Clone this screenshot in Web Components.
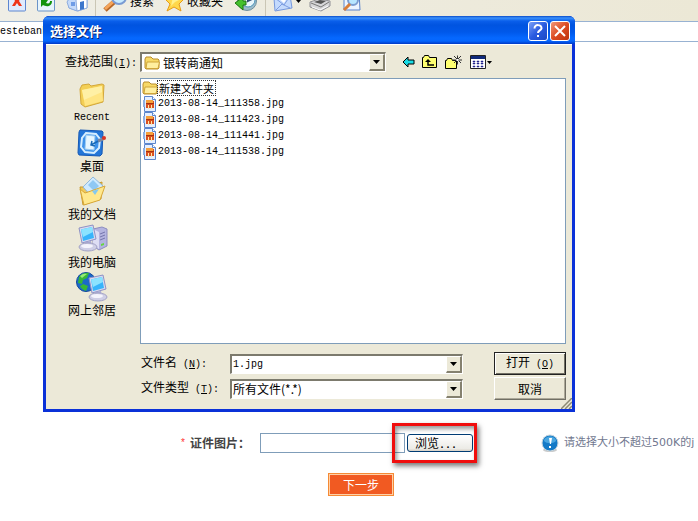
<!DOCTYPE html>
<html lang="zh-CN">
<head>
<meta charset="utf-8">
<title>选择文件</title>
<style>
html, body { margin: 0; height: 100%; overflow: hidden; background: #fff; }
body { font: 12px/16px "Noto Sans CJK SC", sans-serif; color: #000; position: relative; }
</style>
</head>
<body>
<browser-chrome></browser-chrome>
<upload-form></upload-form>
<file-dialog heading="选择文件">
  <place-item slot="places" icon="recent" latin>Recent</place-item>
  <place-item slot="places" icon="desktop">桌面</place-item>
  <place-item slot="places" icon="documents">我的文档</place-item>
  <place-item slot="places" icon="computer">我的电脑</place-item>
  <place-item slot="places" icon="network">网上邻居</place-item>
  <file-item slot="files" icon="folder" focused>新建文件夹</file-item>
  <file-item slot="files" icon="image">2013-08-14_111358.jpg</file-item>
  <file-item slot="files" icon="image">2013-08-14_111423.jpg</file-item>
  <file-item slot="files" icon="image">2013-08-14_111441.jpg</file-item>
  <file-item slot="files" icon="image">2013-08-14_111538.jpg</file-item>
</file-dialog>

<script>
const FOLDER = '<path d="M1 4 2 2h5l2 2h5l1 1v8l-1 1H2l-1-1z" fill="#f7d967" stroke="#b98d2c"/><path d="M3 7h12.5L14 13.5H2z" fill="#ffef9f" stroke="#cfa53a"/>';
const MONITOR = '<path d="M3 4 17 1l3 14-14 4z" fill="#d8daf0" stroke="#8f92c4"/><path d="M5 5.500 16 3l2 11-11 3z" fill="#38b4fb"/><path d="M5 5.500 16 3l1 5-10 5z" fill="#8be3ff"/><path d="M9 18l6-1 1 5-6 1z" fill="#a9a9d6"/><ellipse cx="12" cy="23" rx="9" ry="4" fill="#cfcfe6" stroke="#a3a3c6"/><ellipse cx="11" cy="22" rx="6" ry="2" fill="#f4f4fc"/>';
const ICONS = {
  stop: [18, 20, '<rect x=".5" y="-3" width="17" height="22" rx="1" fill="#dfeafd" stroke="#5c86d0"/><path d="M4 3h3l2 4 2-4h3l-3 6 3 5h-3l-2-3-2 3H4l3-5z" fill="#ee3418"/>'],
  refresh: [18, 20, '<rect x=".5" y="-3" width="17" height="22" rx="1" fill="#e7f4fb" stroke="#6b94c8"/><path d="M15 9c0 6-6 6-9 4l-2 2V8h7l-2 3c3 1 4 0 4-2z" fill="#12930c"/><path d="M4 5h8" stroke="#26a619" stroke-width="3"/>'],
  home: [22, 22, '<path d="M2 8 12 1l9 7v10l-9 3-9-3z" fill="#dce9fc" stroke="#8fadde"/><path d="M1 12 7 3l6 7-2 11-8-3z" fill="#c5dafa" stroke="#8fadde"/><path d="M10 10 16 5l5 4v9l-10 3z" fill="#fff" stroke="#8fadde"/><path d="M14 12l4-1v8l-4 1z" fill="#3d77cc"/><path d="M5 12h4v4H5z" fill="#6f9ce6"/>'],
  search: [24, 22, '<path d="m2 20 9-8" stroke="#b66729" stroke-width="5"/><path d="m2 19 9-8" stroke="#f5a55b" stroke-width="3"/><circle cx="16" cy="7" r="7" fill="#c8ebff" stroke="#7a9bd3" stroke-width="2"/><path d="M12 6q1-4 6-3" stroke="#fff" stroke-width="2" fill="none"/>'],
  star: [19, 22, '<path d="m9 1 3 7 7 1-5 5 2 7-7-4-7 4 3-7-5-5 7-1z" fill="#ffd84b" stroke="#e79b17"/><path d="m9 4 1 5 4 1-4 2-4 4 1-5z" fill="#fff18d"/>'],
  history: [24, 22, '<circle cx="13" cy="11" r="9.500" fill="#9dbccb" stroke="#6f909e"/><circle cx="14" cy="10" r="7" fill="#eaf7fb" stroke="#4b93b7"/><path d="M14 5v6l4-2" stroke="#344c77" stroke-width="2" fill="none"/><path d="m1 13 8-6v4h3v4H9v5z" fill="#45c12e" stroke="#1e7512"/>'],
  mail: [20, 22, '<path d="M1 8 17 5l2 13-17 3z" fill="#c4dafd" stroke="#7698dc"/><path d="m2 8 9 7 6-9M3 20l6-6 8 4" fill="none" stroke="#7c9ce0"/><path d="M4 7 16 5l-5 8z" fill="#fff"/>'],
  print: [22, 22, '<path d="m5 5 11-3 3 8-9 3z" fill="#fff" stroke="#bbb"/><path d="m1 12 9-3 11 2v5l-9 5L1 17z" fill="#d6d6d8" stroke="#909095"/><path d="m2 13 10 4 8-5" fill="none" stroke="#777"/><path d="m5 12 6-2 6 1-5 3z" fill="#555"/><path d="m3 17 8 3 8-4" stroke="#fff" fill="none"/>'],
  preview: [20, 22, '<path d="M2 1h15l1 19H2z" fill="#edf4ff" stroke="#5b83cc"/><circle cx="11" cy="10" r="5" fill="#b8e6ff" stroke="#7c9cd0" stroke-width="2"/><path d="m2 20 6-6" stroke="#d97d38" stroke-width="3"/>'],
  caret: [5, 3, '<path d="M0 0h5L2.500 3z"/>'],
  arrow: [7, 4, '<path d="M0 0h7L3.500 4z"/>'],
  help: [18, 18, '<path d="M5.500 6.500c0-5 7.500-4 7 0-.5 2-3.500 2-3.500 4.500" fill="none" stroke="#fff" stroke-width="2"/><path d="M8 13h2v2H8z" fill="#fff"/>'],
  close: [18, 18, '<path d="m4 4 10 10M14 4 4 14" stroke="#fff" stroke-width="2"/>'],
  folder: [16, 16, FOLDER],
  image: [16, 16, '<path d="M2.500.5h8l3 3v12h-11z" fill="#e4efff" stroke="#5c86cc"/><path d="M10.500.5v3h3" fill="#fff" stroke="#5c86cc"/><path d="M4 5h8v7H4z" fill="#d9501f"/><path d="M4 4h7v3H4z" fill="#f5a03c"/><path d="M4 7h8v1H4z" fill="#a9300e"/><path d="M6 9h1v4H6zM9 9h1v4H9z" fill="#ffe5a3"/><path d="M1 4h2v7H1z" fill="#8eb0e3"/>'],
  recent: [28, 28, '<path d="m2 8 2-4 7-1 2 2 11-2 2 1-1 17-18 5-4-3z" fill="#f3cf55" stroke="#d3a73a"/><path d="M4 9 24 5l1 15-18 5z" fill="#ffe583"/><path d="M4 9 24 5v6L6 19z" fill="#fff0a5"/>'],
  desktop: [30, 28, '<path d="m3 1 22 1 1 1-1 22-2 2-21-1-1-2L2 3z" fill="#2376d8" stroke="#1558b5"/><path d="m9 4 10 1 4 5-1 9-5 5-9-1-4-5 1-9z" fill="#3f93ea" stroke="#d6eeff" stroke-width="2"/><path d="m9 6 9 1-1 14-9-1z" fill="#e6f6ff" stroke="#9acbf3"/><path d="M25 10 14 16m1-4-1 4 4 1" fill="none" stroke="#176ab8" stroke-width="1.500"/><path d="m21 12 5-2" stroke="#7a86a0" stroke-width="3"/><circle cx="27" cy="9" r="2" fill="#d93624"/>'],
  documents: [30, 30, '<path d="M3 11h7l15-5-1 17-18 6z" fill="#f0c95a" stroke="#c99a2f"/><path d="M6 11 16 1l10 9-8 14z" fill="#cfeaff" stroke="#91b9dc"/><path d="m11 9 5-5 6 6-5 5z" fill="#8fc8f4"/><path d="m3 13 5 4 3-1 17-6-5 14-16 5z" fill="#ffe88d" stroke="#d8a738"/><path d="m15 15 7-2-4 6z" fill="#84c9ee"/>'],
  computer: [32, 30, '<path d="m17 5 9-2 5 2v17l-8 4-6-4z" fill="#b4b4e0" stroke="#8d8dc0"/><path d="m17 5 6 3v17l-6-4z" fill="#dedef4"/><path d="m24 10 5-2m-5 5 5-2m-5 5 5-2" stroke="#7474ac"/><path d="m25 20 3-1v2l-3 1z" fill="#66d63f"/>' + MONITOR],
  network: [32, 31, '<circle cx="10" cy="11" r="9.500" fill="#1b69ca" stroke="#13489b"/><path d="M3 6q4-5 10-4l-2 5-4 2-1 4-4-1zM7 13l5 2-2 5q-5-2-6-5z" fill="#37b737"/><path d="M4 5q3-3 7-2l-5 4z" fill="#97ec74"/><g transform="translate(10 3)">' + MONITOR + '</g>'],
  back: [13, 12, '<path d="m1 6 5-5v3h6v4H6v3z" fill="#18dce6" stroke="#000"/>'],
  up: [16, 14, '<path d="M.5 2.500h1l1-2h4l1 2h7v10H.5z" fill="#ffff70" stroke="#000"/><path d="M12 10H6V6" fill="none" stroke="#000" stroke-width="1.500"/><path d="m3 7 3-3 3 3z"/>'],
  create: [18, 15, '<path d="M.5 5.500h1l1-2h4l1 2h4v8H.5z" fill="#ffff70" stroke="#000"/><path d="M12.500.5v9M8 5h9M9 1l7 7M16 1 9 8" stroke="#333"/><path d="M11.500 4h2v2h-2z" fill="#fff"/>'],
  views: [16, 14, '<path d="M.5.500h15v13H.5z" fill="#fff" stroke="#222"/><path d="M1 1h14v3H1z" fill="#102a7a"/><path d="M3 6h2v1H3zM7 6h2v1H7zM11 6h2v1h-2zM3 8h2v1H3zM7 8h2v1H7zM11 8h2v1h-2zM3 11h2v1H3zM7 11h2v1H7zM11 11h2v1h-2z" fill="#25278c" stroke="#25278c" stroke-width=".5"/>'],
  info: [18, 19, '<ellipse cx="9" cy="16" rx="7" ry="2" fill="#ccc"/><circle cx="9" cy="9" r="8" fill="#147ac7" stroke="#c7d5dd"/><path d="M3 7c0-6 12-6 12 0-3 3-9 3-12 0z" fill="#4aa6e0"/><path d="M8 4h3l-1 6H9zM8 12h2v2H8z" fill="#fff"/>'],
  grip: [11, 11, '<path d="M0 11 11 0M4 11l7-7M8 11l3-3" stroke="#8c8974" stroke-width="1.500"/>']
};

function define(name, css, render) {
  customElements.define(name, class extends HTMLElement {
    constructor() {
      super();
      this.attachShadow({ mode: 'open' });
    }
    connectedCallback() {
      const t = document.createElement('template');
      t.innerHTML = '<style>*{box-sizing:border-box}' + css + '</style>' + render(this);
      this.shadowRoot.replaceChildren(t.content.cloneNode(true));
    }
  });
}

define('xp-icon', ':host{display:inline-flex;flex:none}svg{display:block}', el => {
  const [w, h, body] = ICONS[el.getAttribute('name')];
  return `<svg width="${w}" height="${h}" viewBox="0 0 ${w} ${h}" aria-hidden="true">${body}</svg>`;
});

define('browser-chrome', `
  :host{display:block}
  .tools{display:flex;align-items:flex-end;height:21px;padding:0 8px 9px;background:linear-gradient(90deg,#efeee6,#ece8d6);overflow:hidden}
  .tools button{display:flex;align-items:flex-end;gap:3px;border:0;padding:0;background:none;font:inherit;margin-right:11px}
  .tools .tight{margin-right:7px}
  .sep{width:1px;height:32px;background:#cac6b5;margin:0 7px -9px 0}
  .text span{line-height:16px;padding-bottom:3px}
  .tools .menu{align-items:center;margin-right:8px}
  .address{height:21px;background:#fff;border:solid #98b2d2;border-width:1px 0}
  input{display:block;width:100%;height:19px;border:0;padding:0;font:10px/19px "Liberation Mono",monospace;outline:0}
`, () => `
  <div class="tools">
    <button aria-label="停止"><xp-icon name="stop"></xp-icon></button>
    <button aria-label="刷新"><xp-icon name="refresh"></xp-icon></button>
    <button class="tight" aria-label="主页"><xp-icon name="home"></xp-icon></button>
    <span class="sep"></span>
    <button class="text"><xp-icon name="search"></xp-icon><span>搜索</span></button>
    <button class="text"><xp-icon name="star"></xp-icon><span>收藏夹</span></button>
    <button class="tight" aria-label="历史"><xp-icon name="history"></xp-icon></button>
    <span class="sep"></span>
    <button class="menu" aria-label="邮件"><xp-icon name="mail"></xp-icon><xp-icon name="caret"></xp-icon></button>
    <button aria-label="打印"><xp-icon name="print"></xp-icon></button>
    <button aria-label="预览"><xp-icon name="preview"></xp-icon></button>
  </div>
  <div class="address"><input aria-label="地址" value="estebank" readonly></div>`);

define('highlight-box', `
  :host{display:block;position:relative}
  .frame{position:absolute;inset:-11px -4px -11px -15px;border:3px solid #f00d0d;box-shadow:2px 3px 5px #0008,inset 2px 3px 4px #0006;pointer-events:none}
`, () => '<slot></slot><div class="frame"></div>');

define('upload-form', `
  :host{display:block;padding-top:390px}
  .row{display:flex;align-items:center;height:22px;padding-left:181px;white-space:nowrap}
  .star{color:#f33;font:10px/12px "Liberation Sans",sans-serif;width:9px}
  label{font-weight:700;color:#444;width:70px}
  input{width:145px;height:20px;border:1px solid #7f9db9;background:#fff;padding:0 3px;margin-right:2px;flex:none}
  .browse{display:block;width:66px;height:18px;border:1px solid #003c74;border-radius:3px;background:linear-gradient(#fff,#ecebe6 85%,#d6d0c5);font:inherit;line-height:14px;padding:0 7px;text-align:left}
  .browse span{font:700 10px "Liberation Mono",monospace}
  .hint{display:flex;align-items:center;gap:5px;margin-left:68px;font:11px/16px "DejaVu Sans","Noto Sans CJK SC",sans-serif;color:#71788f}
  .next{display:block;margin:19px 0 0 328px;width:66px;height:23px;border:1px solid #f58a35;box-shadow:inset 0 0 0 1px #ffd0a6;background:#f15a22;color:#fff;font:inherit;padding:0}
`, () => `
  <div class="row"><span class="star">*</span><label for="f">证件图片：</label><input id="f" type="text">
    <highlight-box><button class="browse">浏览<span>...</span></button></highlight-box>
    <div class="hint"><xp-icon name="info"></xp-icon><span>请选择大小不超过500K的j</span></div></div>
  <button class="next">下一步</button>`);

define('place-item', `
  :host{display:block}
  button{display:flex;flex-direction:column;align-items:center;justify-content:flex-end;width:100%;height:48px;border:0;padding:0;background:none;font:inherit;line-height:16px;white-space:nowrap}
  :host([latin]) button{font:10px/16px "Liberation Mono",monospace}
  xp-icon{height:31px;align-items:center}
`, el => `<button><xp-icon name="${el.getAttribute('icon')}"></xp-icon><span><slot></slot></span></button>`);

define('file-item', `
  :host{display:flex;align-items:center;height:16px;font:10px/14px "Liberation Mono",monospace}
  :host([focused]){font:11px/14px "Noto Sans CJK SC",sans-serif}
  :host([focused]) span{outline:1px dotted #333;padding:0 1px}
`, el => `<xp-icon name="${el.getAttribute('icon')}"></xp-icon><span><slot></slot></span>`);

define('combo-field', `
  :host{display:flex;align-items:center;height:20px;background:#fff;border:solid;border-width:2px 1px 1px 2px;border-color:#7c7a6d #fff #fff #7c7a6d;min-width:0}
  ::slotted(select),::slotted(input){appearance:none;flex:1;min-width:0;height:17px;border:0;padding:0 0 0 1px;margin:0;background:none;font:12px/16px "Noto Sans CJK SC",sans-serif;color:#000;outline:0}
  ::slotted(input){font:10px/16px "Liberation Mono",monospace}
  ::slotted(xp-icon){margin:0 2px}
  .drop{display:flex;align-items:center;justify-content:center;flex:none;width:16px;height:17px;background:#ece9d8;border:solid;border-width:1px 2px 2px 1px;border-color:#fff #85816f #85816f #fff;pointer-events:none}
`, () => '<slot></slot><span class="drop"><xp-icon name="arrow"></xp-icon></span>');

define('classic-button', `
  :host{display:block}
  button{display:block;width:100%;height:23px;border:1px solid;border-color:#fff #716f64 #716f64 #fff;box-shadow:inset -1px -1px #aca899;background:#ece9d8;font:12px/16px "Noto Sans CJK SC",sans-serif;padding:0}
  :host([primary]) button{border-color:#222;box-shadow:inset 1px 1px #fff,inset -1px -1px #716f64}
`, () => '<button><slot></slot></button>');

define('file-dialog', `
  :host{position:absolute;top:16px;left:43px;right:123px;display:block;border:solid #0a31d8;border-width:0 3px 3px;border-radius:6px 6px 0 0;background:#0a31d8;box-shadow:inset 0 0 0 1px #0019a0}
  header{display:flex;align-items:center;gap:2px;height:28px;margin:0 -3px;padding:2px 5px 0 7px;border-radius:6px 6px 0 0;background:linear-gradient(#0a4bc9,#3a91fb 2px,#0a5feb 5px,#0054e0 9px,#0058ea 16px,#0568ff 22px,#0566fd 25px,#0038c5)}
  h1{flex:1;margin:0;color:#fff;font-size:13px;line-height:20px;text-shadow:1px 1px #0b2470}
  header button{display:flex;width:20px;height:20px;align-items:center;justify-content:center;padding:0;border:1px solid #fff;border-radius:3px;background:linear-gradient(135deg,#7ba0f7,#2a5be0 50%,#1b48c4)}
  header .close{background:linear-gradient(135deg,#f0987b,#dd4b22 50%,#bd330d)}
  .body{display:grid;grid-template-columns:94px minmax(0,1fr);background:#ece9d8;padding:7px 6px 9px 0;border-top:1px solid #fff;position:relative}
  .lookin{display:contents}
  .u{font:10px/16px "Liberation Mono",monospace}
  u{text-underline-offset:1px}
  .lookin label{padding-left:19px;line-height:18px;white-space:nowrap}
  .bar{display:flex;align-items:center;margin-bottom:6px}
  .bar combo-field{flex:0 1 246px}
  .bar nav{display:flex;align-items:center;gap:7px;margin-left:16px}
  .bar nav button{border:0;padding:0;background:none;display:flex;align-items:center;gap:1px}
  .places{padding-right:2px}
  .files{border:1px solid #7f9db9;background:#fff;padding:1px;min-height:266px}
  .foot{grid-column:2;display:grid;grid-template-columns:90px minmax(0,233px) minmax(0,1fr) 72px;row-gap:2px;margin-top:8px;align-items:center}
  .foot classic-button{grid-column:4}
  .foot label{white-space:nowrap;padding-left:1px}
  .grip{position:absolute;right:0;bottom:0;display:flex}
`, el => `
  <header><h1>${el.getAttribute('heading')}</h1><button aria-label="帮助"><xp-icon name="help"></xp-icon></button><button class="close" aria-label="关闭"><xp-icon name="close"></xp-icon></button></header>
  <div class="body">
    <div class="lookin"><label for="look">查找范围<span class="u">(<u>I</u>):</span></label>
      <div class="bar"><combo-field><xp-icon name="folder"></xp-icon><select id="look"><option>银转商通知</option></select></combo-field>
        <nav><button aria-label="后退"><xp-icon name="back"></xp-icon></button><button aria-label="向上"><xp-icon name="up"></xp-icon></button><button aria-label="新建文件夹"><xp-icon name="create"></xp-icon></button><button aria-label="查看"><xp-icon name="views"></xp-icon><xp-icon name="caret"></xp-icon></button></nav></div></div>
    <nav class="places"><slot name="places"></slot></nav>
    <div class="files"><slot name="files"></slot></div>
    <div class="foot">
      <label for="name">文件名<span class="u"> (<u>N</u>):</span></label><combo-field><input id="name" value="1.jpg"></combo-field><classic-button primary>打开<span class="u"> (<u>O</u>)</span></classic-button>
      <label for="type">文件类型<span class="u"> (<u>T</u>):</span></label><combo-field><select id="type"><option>所有文件(*.*)</option></select></combo-field><classic-button>取消</classic-button>
    </div>
    <span class="grip"><xp-icon name="grip"></xp-icon></span>
  </div>`);
</script>
</body>
</html>
